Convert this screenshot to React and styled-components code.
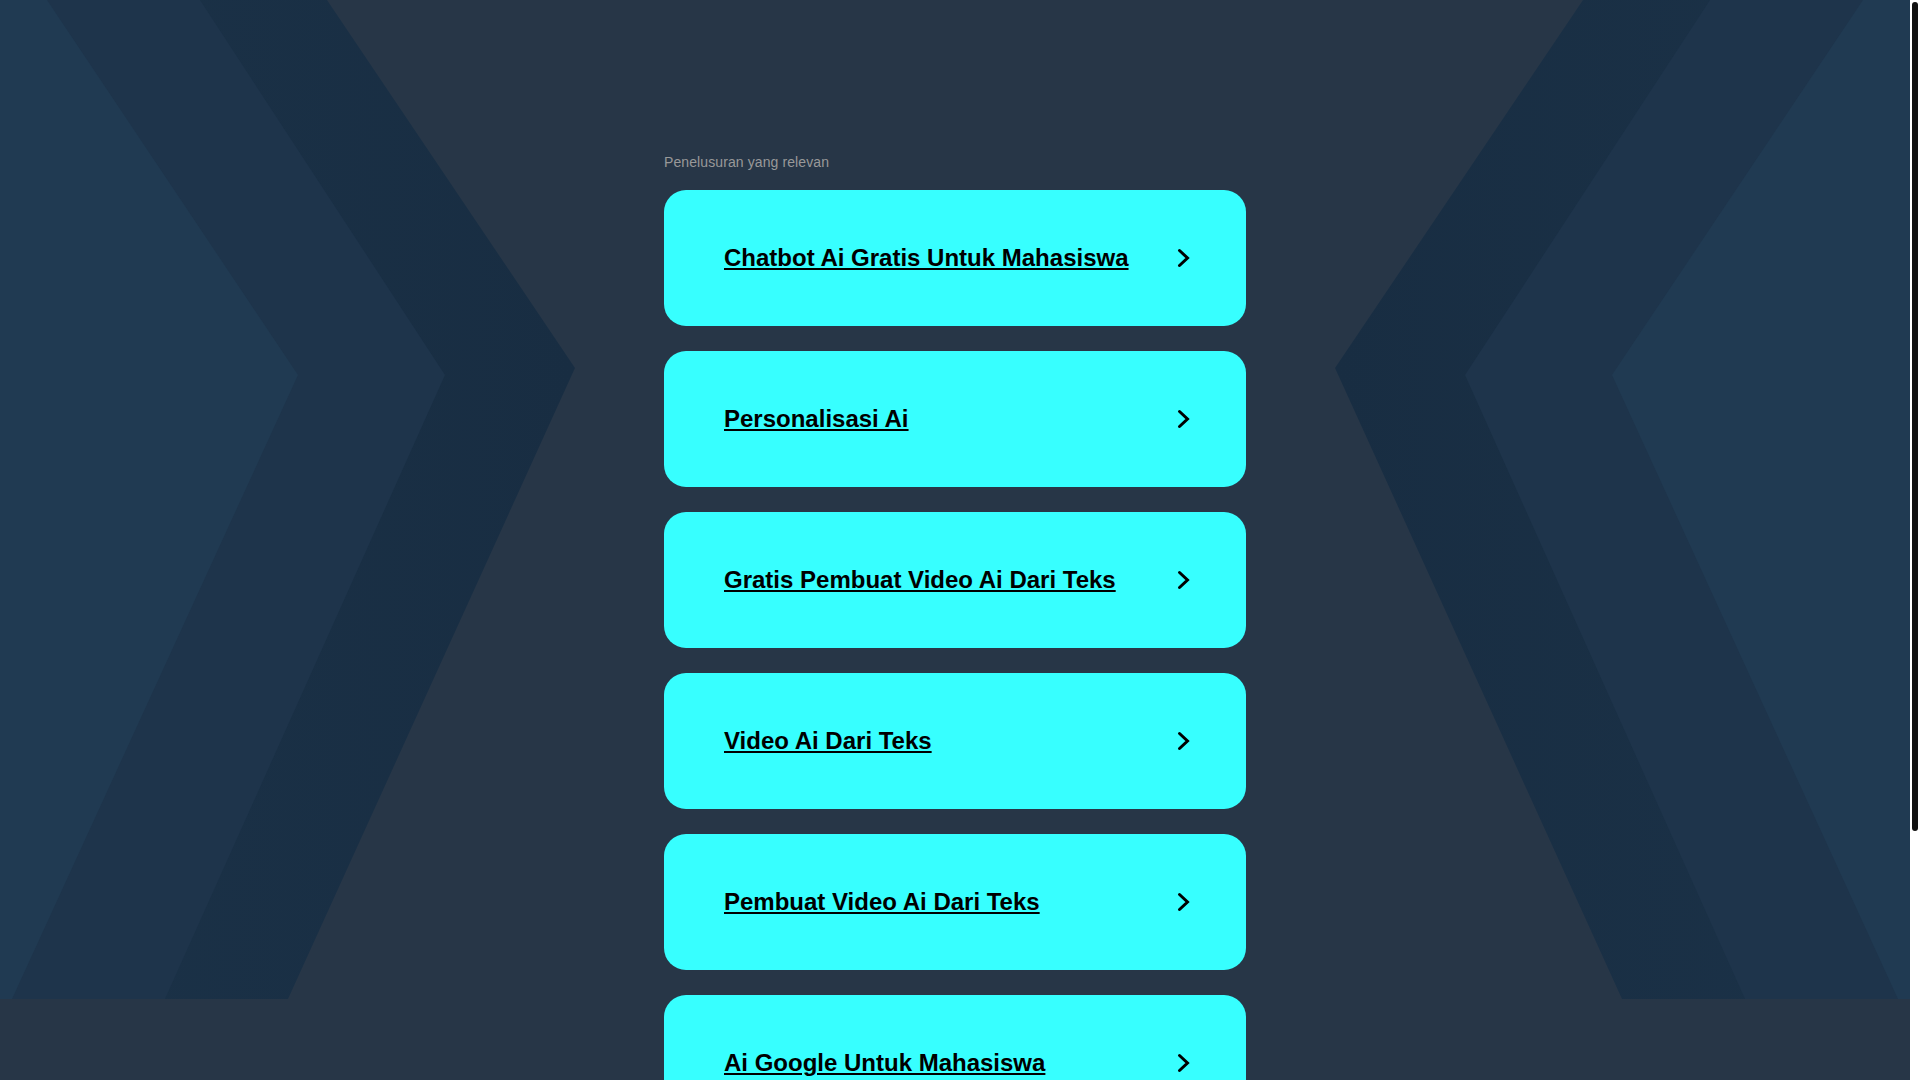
import React from 'react';
import styled, { createGlobalStyle } from 'styled-components';

const searches = [
  'Chatbot Ai Gratis Untuk Mahasiswa',
  'Personalisasi Ai',
  'Gratis Pembuat Video Ai Dari Teks',
  'Video Ai Dari Teks',
  'Pembuat Video Ai Dari Teks',
  'Ai Google Untuk Mahasiswa',
];

const GlobalStyle = createGlobalStyle`
  html, body {
    margin: 0;
    padding: 0;
    background: #273647;
    font-family: "Liberation Sans", Arial, sans-serif;
  }
`;

const Page = styled.div`
  position: relative;
  min-height: 100vh;
  margin-right: 10px;
`;

const Backdrop = styled.svg`
  position: absolute;
  top: 0;
  left: 0;
  width: 100%;
  height: 999px;
  z-index: 0;
`;

// the browser scrollbar seen in the screenshot
const ScrollTrack = styled.div`
  position: fixed;
  top: 0;
  right: 0;
  width: 10px;
  height: 100vh;
  background: #fff;
  z-index: 5;
`;

const ScrollThumb = styled.div`
  margin: 2px 2px 0;
  height: 829px;
  background: #111;
  border-radius: 3px;
`;

const Content = styled.main`
  position: relative;
  z-index: 1;
  width: 582px;
  margin: 0 auto;
  padding: 154px 0 276px;
`;

const Heading = styled.p`
  margin: 0 0 20px;
  font-size: 14px;
  letter-spacing: 0.1px;
  color: #999;
`;

const List = styled.div`
  display: flex;
  flex-direction: column;
  gap: 25px;
`;

const Card = styled.a`
  display: flex;
  align-items: center;
  justify-content: space-between;
  box-sizing: border-box;
  height: 136px;
  padding: 0 55px 0 60px;
  background: #37ffff;
  border-radius: 22px;
  text-decoration: none;
  cursor: pointer;
`;

const Title = styled.span`
  font-size: 24px;
  font-weight: bold;
  color: #000;
  text-decoration: underline;
`;

const Chevron = () => (
  <svg width="14" height="20" viewBox="0 0 14 20" fill="none">
    <polyline
      points="2.5,2.5 10.5,10 2.5,17.5"
      stroke="#000"
      strokeWidth="3"
      strokeLinecap="round"
      strokeLinejoin="miter"
    />
  </svg>
);

// mirrored chevron layers, coordinates measured on a 1910 wide canvas
const layers = [
  { top: 327, tip: 575, tipY: 368, bottom: 288, fill: 'url(#outer)' },
  { top: 200, tip: 445, tipY: 375, bottom: 165, fill: '#1e344b' },
  { top: 47, tip: 298, tipY: 375, bottom: 12, fill: '#203a52' },
];

const Pattern = () => (
  <Backdrop viewBox="0 0 1910 999" preserveAspectRatio="none">
    <defs>
      <linearGradient id="outer" x1="0" x2="1" y1="0" y2="0">
        <stop offset="0" stopColor="#1b3248" />
        <stop offset="1" stopColor="#182d42" />
      </linearGradient>
      <linearGradient id="outerR" x1="1" x2="0" y1="0" y2="0">
        <stop offset="0" stopColor="#1b3248" />
        <stop offset="1" stopColor="#182d42" />
      </linearGradient>
    </defs>
    {layers.map((l, i) => (
      <g key={i}>
        <polygon
          fill={l.fill}
          points={`0,0 ${l.top},0 ${l.tip},${l.tipY} ${l.bottom},999 0,999`}
        />
        <polygon
          fill={i === 0 ? 'url(#outerR)' : l.fill}
          points={`1910,0 ${1910 - l.top},0 ${1910 - l.tip},${l.tipY} ${1910 - l.bottom},999 1910,999`}
        />
      </g>
    ))}
  </Backdrop>
);

const App = () => {
  return (
    <Page>
      <GlobalStyle />
      <Pattern />
      <Content>
        <Heading>Penelusuran yang relevan</Heading>
        <List>
          {searches.map((s) => (
            <Card key={s}>
              <Title>{s}</Title>
              <Chevron />
            </Card>
          ))}
        </List>
      </Content>
      <ScrollTrack>
        <ScrollThumb />
      </ScrollTrack>
    </Page>
  );
};

export default App;
